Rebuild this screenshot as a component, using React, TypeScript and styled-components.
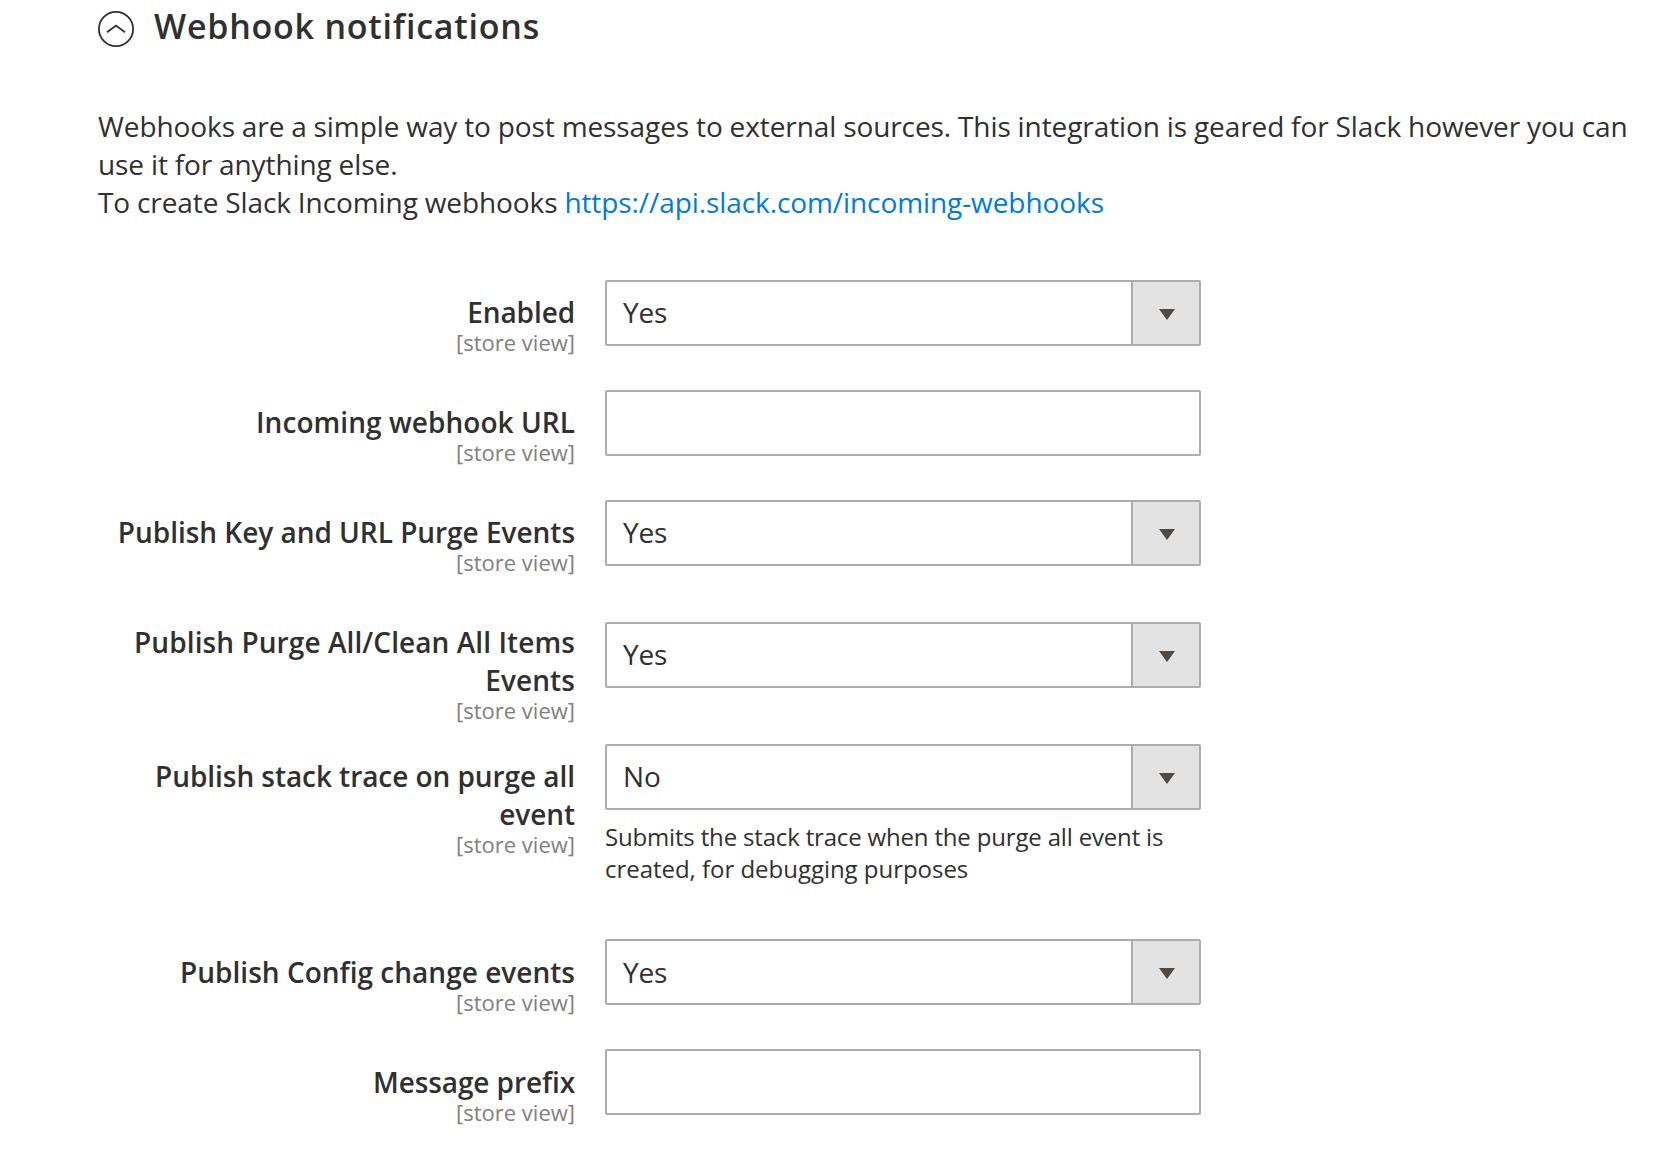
import React from "react";
import styled, { createGlobalStyle } from "styled-components";

const Global = createGlobalStyle`
  * { box-sizing: border-box; }
  html, body { margin: 0; background: #fff; overflow: hidden; }
  body { font-family: "Open Sans", "Noto Sans", sans-serif; color: #303030; }
`;

const Page = styled.main`
  width: 1664px;
  height: 1152px;
  padding: 1px 0 0 98px;
`;

const Header = styled.header`
  display: flex;
  align-items: center;
  gap: 19px;
  height: 56px;
`;

const Title = styled.h2`
  margin: 0 0 7px;
  font-size: 34px;
  line-height: 50px;
  font-weight: 600;
  letter-spacing: 0.77px;
  white-space: nowrap;
`;

const Intro = styled.div`
  margin-top: 50px;
  font-size: 28px;
  line-height: 38px;
  letter-spacing: -0.085px;
  word-spacing: -0.28px;
  white-space: nowrap;
`;

const Link = styled.a`
  color: #007bdb;
  text-decoration: none;
`;

const Form = styled.div`
  margin-top: 59px;
`;

const Row = styled.div<{ $h: number }>`
  display: flex;
  gap: 30px;
  height: ${(p) => p.$h}px;
`;

const LabelCell = styled.div<{ $top: number }>`
  width: 477px;
  padding-top: ${(p) => p.$top}px;
  text-align: right;
  white-space: nowrap;
`;

const Label = styled.label<{ $track: number }>`
  display: block;
  font-size: 28px;
  line-height: 38px;
  font-weight: 600;
  letter-spacing: ${(p) => p.$track}px;
`;

const Scope = styled.span`
  display: block;
  font-size: 22px;
  line-height: 22px;
  color: #808080;
`;

const ValueCell = styled.div<{ $top: number }>`
  width: 596px;
  padding-top: ${(p) => p.$top}px;
`;

const Control = styled.div<{ $line: number }>`
  display: flex;
  height: 66px;
  border: 2px solid #adadad;
  border-radius: 2px;
  font-size: 28px;
  line-height: ${(p) => p.$line}px;
`;

const Value = styled.span`
  flex: 1;
  padding-left: 16px;
  letter-spacing: -0.15px;
`;

const Arrow = styled.span`
  display: flex;
  align-items: center;
  justify-content: center;
  width: 68px;
  padding: 2px 0 0 2px;
  border-left: 2px solid #adadad;
  background: #e3e3e3;
`;

const Note = styled.p`
  margin: 11px 0 0;
  font-size: 24px;
  line-height: 32px;
  white-space: nowrap;
`;

const NoteLine = styled.span<{ $track: number }>`
  display: block;
  letter-spacing: ${(p) => p.$track}px;
`;

type Field = {
  label: string[];
  h: number;
  track?: number;
  labelTop?: number;
  top?: number;
  line?: number;
  value?: string;
  note?: { text: string; track: number }[];
};

const fields: Field[] = [
  { label: ["Enabled"], h: 110, track: -0.1, value: "Yes" },
  { label: ["Incoming webhook URL"], h: 110, track: 0.05 },
  { label: ["Publish Key and URL Purge Events"], h: 110, track: -0.03, value: "Yes" },
  { label: ["Publish Purge All/Clean All Items", "Events"], h: 134, track: 0.08, top: 12, value: "Yes" },
  {
    label: ["Publish stack trace on purge all", "event"],
    h: 195,
    track: -0.06,
    value: "No",
    note: [
      { text: "Submits the stack trace when the purge all event is", track: -0.17 },
      { text: "created, for debugging purposes", track: -0.03 },
    ],
  },
  { label: ["Publish Config change events"], h: 110, track: 0.02, labelTop: 14, line: 62, value: "Yes" },
  { label: ["Message prefix"], h: 100, track: -0.1, labelTop: 14 },
];

export default function App() {
  return (
    <Page>
      <Global />
      <Header>
        <svg width="37" height="36" viewBox="0 0 37 36" fill="none" stroke="#303030">
          <circle cx="18" cy="18" r="17.1" strokeWidth="1.8" />
          <path d="M9 21.3L18 14.6L27 21.3" strokeWidth="1.9" />
        </svg>
        <Title>Webhook notifications</Title>
      </Header>
      <Intro>
        Webhooks are a simple way to post messages to external sources. This integration is geared for Slack however you can
        <br />use it for anything else.
        <br />To create Slack Incoming webhooks <Link href="#">https://api.slack.com/incoming-webhooks</Link>
      </Intro>
      <Form>
        {fields.map((f) => (
          <Row key={f.label[0]} $h={f.h}>
            <LabelCell $top={f.labelTop ?? 13}>
              <Label $track={f.track ?? 0}>
                {f.label.map((t, i) => (
                  <React.Fragment key={t}>{i > 0 && <br />}{t}</React.Fragment>
                ))}
              </Label>
              <Scope>[store view]</Scope>
            </LabelCell>
            <ValueCell $top={f.top ?? 0}>
              <Control $line={f.line ?? 60}>
                {f.value && (
                  <>
                    <Value>{f.value}</Value>
                    <Arrow>
                      <svg width="16" height="12" viewBox="0 0 16 12"><path d="M0 1H16L8 12Z" fill="#514943" /></svg>
                    </Arrow>
                  </>
                )}
              </Control>
              {f.note && (
                <Note>
                  {f.note.map((n) => <NoteLine key={n.text} $track={n.track}>{n.text}</NoteLine>)}
                </Note>
              )}
            </ValueCell>
          </Row>
        ))}
      </Form>
    </Page>
  );
}
